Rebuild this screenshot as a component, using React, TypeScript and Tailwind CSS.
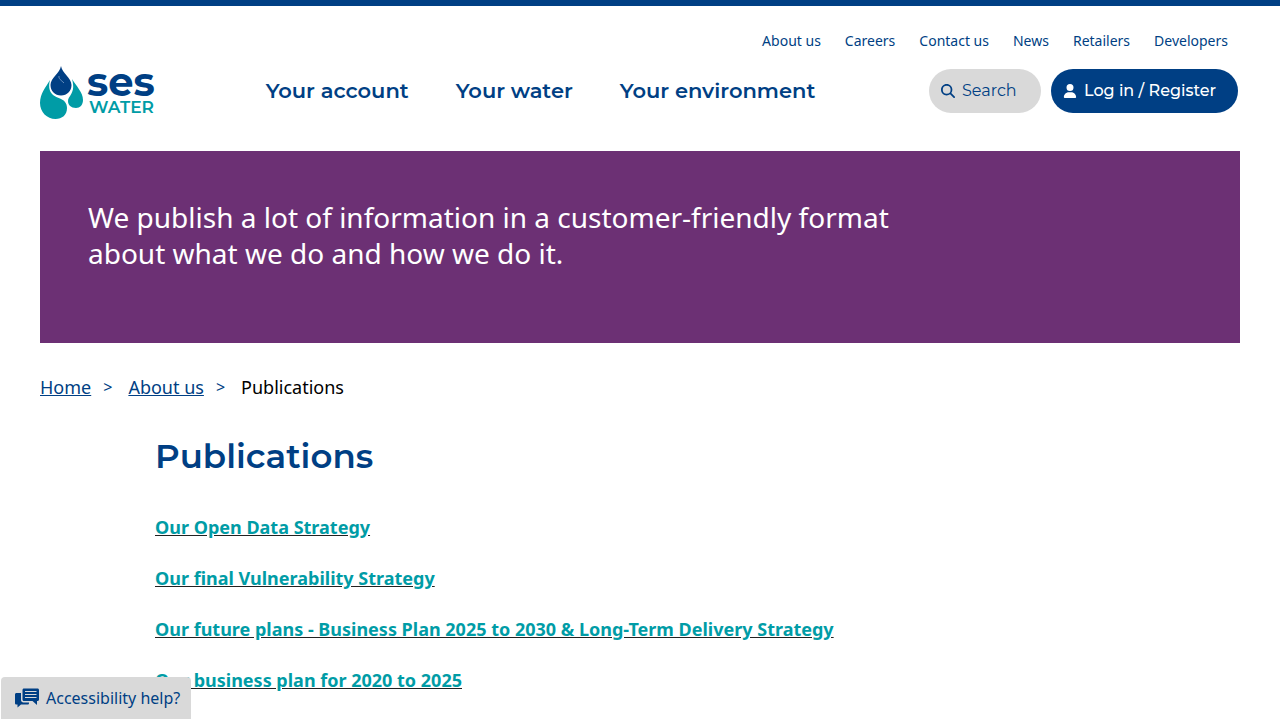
import { FaMagnifyingGlass, FaUser } from "react-icons/fa6"

const topLinks = ["About us", "Careers", "Contact us", "News", "Retailers", "Developers"]

const mainLinks = ["Your account", "Your water", "Your environment"]

const publications = [
  "Our Open Data Strategy",
  "Our final Vulnerability Strategy",
  "Our future plans - Business Plan 2025 to 2030 & Long-Term Delivery Strategy",
  "Our business plan for 2020 to 2025",
]

function Logo() {
  return (
    <svg className="block h-14 w-[116px] overflow-visible" viewBox="0 -3 116 56" role="img" aria-label="SES Water">
      <path
        fill="#009ca6"
        d="M10 14C6 21 0 27 0 37C0 46 7 53 15.500 53C22 53 27 49 27 42C27 37 24 34 20 32.500C15 31 10 28 9.300 22C9 19 9.300 16.500 10 14Z"
      />
      <path
        fill="#009ca6"
        d="M32 13C36 20 43 26 43 34C43 39 40 42 36 42C31 42 28 39 28 35C28 31 33 28 33.200 21C33.200 18 32.800 16 32 13Z"
      />
      <path fill="#003f84" d="M21 0C20 7 10.500 12 10.500 19C10.500 25 15 29.500 21 29.500C27 29.500 31.500 25 31.500 19C31.500 12 22 7 21 0Z" />
      <path stroke="#7f9fc8" strokeWidth="0.800" fill="none" d="M19 10C18.500 13 21 14 24 17" />
      <text x="47" y="30" fontSize="40" className="fill-[#003f84] font-[Montserrat,Inter,sans-serif] font-bold">
        ses
      </text>
      <text x="49" y="47" fontSize="17" className="fill-[#009ca6] font-[Montserrat,Inter,sans-serif] font-semibold">
        WATER
      </text>
    </svg>
  )
}

function ChatIcon() {
  return (
    <svg className="h-5 w-6" viewBox="0 0 24 20" aria-hidden="true">
      <path
        fill="#003f84"
        d="M1.500 5H6V12C6 13.500 7 14.500 8.500 14.500H14V15C14 16 13.500 16.500 12.500 16.500H6L2.500 19.500V16.500H1.500C0.600 16.500 0 16 0 15V6.500C0 5.600 0.600 5 1.500 5Z"
      />
      <path
        fill="#003f84"
        d="M9 0.500H22.500C23.400 0.500 24 1.100 24 2V11.500C24 12.400 23.400 13 22.500 13H22V17L17.500 13H9C8 13 7.500 12.400 7.500 11.500V2C7.500 1.100 8 0.500 9 0.500Z"
      />
      <path stroke="#d9d9d9" strokeWidth="1" d="M10 3.500H21.500M10 6.500H21.500M10 9.500H21.500" />
    </svg>
  )
}

export default function App() {
  return (
    <div className="h-screen overflow-hidden border-t-6 border-[#003f84] bg-white px-10 font-['Noto_Sans',sans-serif] text-[#003f84]">
      <header>
        <nav aria-label="Secondary" className="flex justify-end gap-6 pt-[25px] pr-3 text-sm">
          {topLinks.map((link) => (
            <a key={link} href="#">
              {link}
            </a>
          ))}
        </nav>
        <div className="mt-3 flex items-center justify-between pr-[2px] font-[Montserrat,Inter,sans-serif]">
          <a href="#">
            <Logo />
          </a>
          <nav aria-label="Main" className="flex gap-[47px] pr-1 text-[21px] font-semibold">
            {mainLinks.map((link) => (
              <a key={link} href="#">
                {link}
              </a>
            ))}
          </nav>
          <div className="flex gap-[10px]">
            <button className="flex h-11 w-28 items-center gap-[7px] rounded-full bg-[#d9d9d9] px-3">
              <FaMagnifyingGlass className="size-[14px]" />
              Search
            </button>
            <button className="flex h-11 w-[187px] items-center gap-[7px] rounded-full bg-[#003f84] px-3 font-medium text-white">
              <FaUser className="size-[14px]" />
              Log in / Register
            </button>
          </div>
        </div>
      </header>

      <section className="mt-8 h-48 bg-[#6c3074] px-12 pt-12 text-white">
        <p className="max-w-[828px] text-[28px] leading-9">
          We publish a lot of information in a customer-friendly format about what we do and how we do it.
        </p>
      </section>

      <nav aria-label="Breadcrumb" className="mt-8 flex items-center gap-3 text-lg leading-6">
        <a href="#" className="underline">
          Home
        </a>
        <span className="mr-1 text-base">&gt;</span>
        <a href="#" className="underline">
          About us
        </a>
        <span className="mr-1 text-base">&gt;</span>
        <span className="text-black">Publications</span>
      </nav>

      <main className="px-[115px]">
        <h1 className="mt-8 font-[Montserrat,Inter,sans-serif] text-[34px] leading-[50px] font-semibold">
          Publications
        </h1>
        <ul className="mt-[33px] space-y-6 text-lg leading-[27px] font-bold">
          {publications.map((title) => (
            <li key={title}>
              <a href="#" className="text-[#009ca6] underline decoration-[#222222]">
                {title}
              </a>
            </li>
          ))}
        </ul>
      </main>

      <button className="fixed bottom-px left-px flex h-[42px] items-center gap-[7px] rounded-t bg-[#d9d9d9] pr-[11px] pl-[14px]">
        <ChatIcon />
        Accessibility help?
      </button>
    </div>
  )
}
